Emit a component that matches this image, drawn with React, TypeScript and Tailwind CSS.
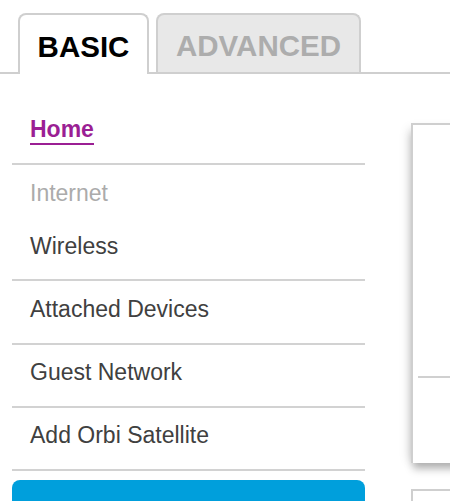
export default function App() {
  return (
    <div className="w-[450px] h-[501px] overflow-hidden bg-white font-['Liberation_Sans',Arial,sans-serif]">
      {/* Tabs */}
      <div className="flex items-end pl-[18px] pt-[13px] h-[74px] border-b-2 border-[#cfcfcf]">
        <div className="w-[131px] h-[61px] mb-[-2px] bg-white border-2 border-b-0 border-[#cfcfcf] rounded-t-[8px] flex items-center justify-center pt-[4px] text-[29.5px] font-bold text-black leading-none">
          BASIC
        </div>
        <div className="ml-[7px] w-[205px] h-[59px] bg-[#e8e8e8] border-2 border-b-0 border-[#cfcfcf] rounded-t-[8px] flex items-center justify-center pt-[4px] text-[29.5px] font-bold text-[#adadad] leading-none">
          ADVANCED
        </div>
      </div>

      {/* Main */}
      <div className="flex pl-[12px] gap-[46px]">
        {/* Sidebar */}
        <div className="w-[353px] shrink-0 flex flex-col">
          <div className="h-[89px] pt-[44px] pl-[18px]">
            <span className="inline-block text-[23px] leading-[23px] font-bold text-[#9b1f94] pb-[2px] border-b-2 border-[#9b1f94]">
              Home
            </span>
          </div>
          <div className="h-[2px] bg-[#d2d2d2]" />
          <div className="h-[51px] pt-[5px] pl-[18px] flex items-center text-[23px] text-[#ababab]">
            Internet
          </div>
          <div className="h-[63px] pb-[3px] pl-[18px] flex items-center text-[23px] text-[#404040]">
            Wireless
          </div>
          <div className="h-[2px] bg-[#d2d2d2]" />
          <div className="h-[62px] pb-[6px] pl-[18px] flex items-center text-[23px] text-[#404040]">
            Attached Devices
          </div>
          <div className="h-[2px] bg-[#d2d2d2]" />
          <div className="h-[61px] pb-[6px] pl-[18px] flex items-center text-[23px] text-[#404040]">
            Guest Network
          </div>
          <div className="h-[2px] bg-[#d2d2d2]" />
          <div className="h-[61px] pb-[6px] pl-[18px] flex items-center text-[23px] text-[#404040]">
            Add Orbi Satellite
          </div>
          <div className="h-[2px] bg-[#d2d2d2]" />
          <div className="mt-[9px] h-[60px] bg-[#009fdc] rounded-[8px]" />
        </div>

        {/* Content */}
        <div className="flex-1 pt-[49px] flex flex-col">
          <div className="h-[340px] w-[80px] bg-white border-t-2 border-l-2 border-[#cfcfcf] shadow-[0_8px_8px_-2px_rgba(0,0,0,0.28),-6px_2px_10px_-4px_rgba(0,0,0,0.14)] pt-[251px] pl-[5px]">
            <div className="h-[2px] bg-[#d0d0d0]" />
          </div>
          <div className="mt-[26px] h-[60px] w-[80px] bg-white border-t-2 border-l-2 border-[#cfcfcf]" />
        </div>
      </div>
    </div>
  );
}
